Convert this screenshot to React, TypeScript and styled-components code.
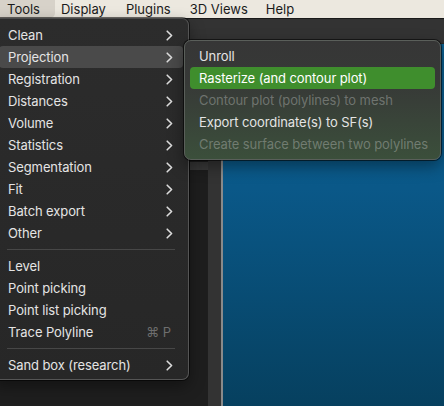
import React from "react";
import styled, { createGlobalStyle } from "styled-components";

const GlobalStyle = createGlobalStyle`
  html, body {
    margin: 0;
    padding: 0;
    background: #1e1e1e;
  }
  body {
    font-family: Inter, "Noto Sans", "Liberation Sans", sans-serif;
  }
`;

const Screen = styled.div`
  position: relative;
  width: 444px;
  height: 406px;
  overflow: hidden;
  display: flex;
  flex-direction: column;
  background: #1e1e1e;
`;

const MenuBar = styled.div`
  height: 18px;
  flex: none;
  display: flex;
  align-items: center;
  background: #ece8df;
  border-bottom: 1px solid #1a1a1a;
`;

const MenuBarItem = styled.div<{ $active?: boolean; $left: number; $right: number }>`
  height: 18px;
  display: flex;
  align-items: center;
  padding: 0 ${(p) => p.$right}px 0 ${(p) => p.$left}px;
  font-size: 13px;
  color: #1b1b1b;
  background: ${(p) => (p.$active ? "#d7d2c9" : "transparent")};
  border-radius: 0 0 5px 0;
`;

const Workspace = styled.div`
  flex: 1;
  display: flex;
  flex-direction: column;
`;

const Toolbar = styled.div`
  height: 24px;
  flex: none;
  background: #333333;
  border-bottom: 1px solid #2a2a2a;
`;

const Panes = styled.div`
  flex: 1;
  display: flex;
`;

const SidePane = styled.div`
  width: 208px;
  flex: none;
  background: #1e1e1e;
  display: flex;
  justify-content: flex-end;
`;

const SideTab = styled.div`
  width: 18px;
  height: 8px;
  margin-top: 118px;
  background: #3a3a3a;
`;

const Gutter = styled.div`
  width: 13px;
  flex: none;
  background: #333333;
  border-right: 2px solid #8a8a8a;
`;

const Viewport = styled.div`
  flex: 1;
  background: linear-gradient(180deg, #0b5f8f 0%, #0a5888 40%, #06405f 100%);
`;

const Menu = styled.div<{ $left: number; $top: number; $width: number }>`
  position: absolute;
  left: ${(p) => p.$left}px;
  top: ${(p) => p.$top}px;
  width: ${(p) => p.$width}px;
  box-sizing: border-box;
  padding: 5px 5px;
  border-radius: 7px;
  border: 1px solid #555555;
  box-shadow: 0 0 0 1px rgba(0, 0, 0, 0.55), 0 6px 16px rgba(0, 0, 0, 0.4);
`;

const MainMenu = styled(Menu)`
  padding-top: 5px;
  padding-bottom: 3px;
  background: linear-gradient(180deg, #2c2c2c 0%, #272727 100%);
  border-top-color: #4a4a4a;
`;

const SubMenu = styled(Menu)`
  padding-top: 4px;
  padding-bottom: 4px;
  background: linear-gradient(180deg, #363636 0%, #373937 35%, #3b4f3b 100%);
  border-color: #5a5f5a;
`;

const Item = styled.div<{ $state?: "hover" | "active" | "disabled"; $indent: number }>`
  height: 22px;
  display: flex;
  align-items: center;
  padding: 0 9px 0 ${(p) => p.$indent}px;
  border-radius: 4px;
  font-size: 13px;
  letter-spacing: -0.1px;
  white-space: nowrap;
  color: ${(p) =>
    p.$state === "disabled" ? "rgba(255,255,255,0.28)" : p.$state === "active" ? "#ffffff" : "#e4e4e4"};
  background: ${(p) =>
    p.$state === "hover" ? "#4a4a4a" : p.$state === "active" ? "#3f8e2d" : "transparent"};
`;

const Label = styled.span`
  flex: 1;
`;

const Shortcut = styled.span`
  color: #6e6e6e;
  font-size: 13px;
  padding-right: 3px;
`;

const Separator = styled.div`
  height: 1px;
  margin: 5px 8px 5px 8px;
  background: #474747;
`;

const Chevron = () => (
  <svg width="7" height="11" viewBox="0 0 7 11" style={{ marginRight: 1 }}>
    <path d="M1.2 1.2 L5.6 5.5 L1.2 9.8" fill="none" stroke="#dcdcdc" strokeWidth="1.6" strokeLinecap="round" strokeLinejoin="round" />
  </svg>
);

type Entry = { label: string; sub?: boolean; shortcut?: string; state?: "hover" | "active" | "disabled" } | "sep";

const toolsItems: Entry[] = [
  { label: "Clean", sub: true },
  { label: "Projection", sub: true, state: "hover" },
  { label: "Registration", sub: true },
  { label: "Distances", sub: true },
  { label: "Volume", sub: true },
  { label: "Statistics", sub: true },
  { label: "Segmentation", sub: true },
  { label: "Fit", sub: true },
  { label: "Batch export", sub: true },
  { label: "Other", sub: true },
  "sep",
  { label: "Level" },
  { label: "Point picking" },
  { label: "Point list picking" },
  { label: "Trace Polyline", shortcut: "⌘ P" },
  "sep",
  { label: "Sand box (research)", sub: true },
];

const projectionItems: Entry[] = [
  { label: "Unroll" },
  { label: "Rasterize (and contour plot)", state: "active" },
  { label: "Contour plot (polylines) to mesh", state: "disabled" },
  { label: "Export coordinate(s) to SF(s)" },
  { label: "Create surface between two polylines", state: "disabled" },
];

const renderEntries = (entries: Entry[], indent: number) =>
  entries.map((e, i) =>
    e === "sep" ? (
      <Separator key={i} />
    ) : (
      <Item key={i} $state={e.state} $indent={indent}>
        <Label>{e.label}</Label>
        {e.shortcut && <Shortcut>{e.shortcut}</Shortcut>}
        {e.sub && <Chevron />}
      </Item>
    )
  );

export default function App() {
  return (
    <Screen>
      <GlobalStyle />
      <MenuBar>
        <MenuBarItem $active $left={7} $right={15}>Tools</MenuBarItem>
        <MenuBarItem $left={6} $right={11}>Display</MenuBarItem>
        <MenuBarItem $left={9} $right={10}>Plugins</MenuBarItem>
        <MenuBarItem $left={9} $right={9}>3D Views</MenuBarItem>
        <MenuBarItem $left={9} $right={9}>Help</MenuBarItem>
      </MenuBar>
      <Workspace>
        <Toolbar />
        <Panes>
          <SidePane>
            <SideTab />
          </SidePane>
          <Gutter />
          <Viewport />
        </Panes>
      </Workspace>
      <MainMenu $left={-7} $top={18} $width={196}>
        {renderEntries(toolsItems, 9)}
      </MainMenu>
      <SubMenu $left={184} $top={40} $width={257}>
        {renderEntries(projectionItems, 9)}
      </SubMenu>
    </Screen>
  );
}
